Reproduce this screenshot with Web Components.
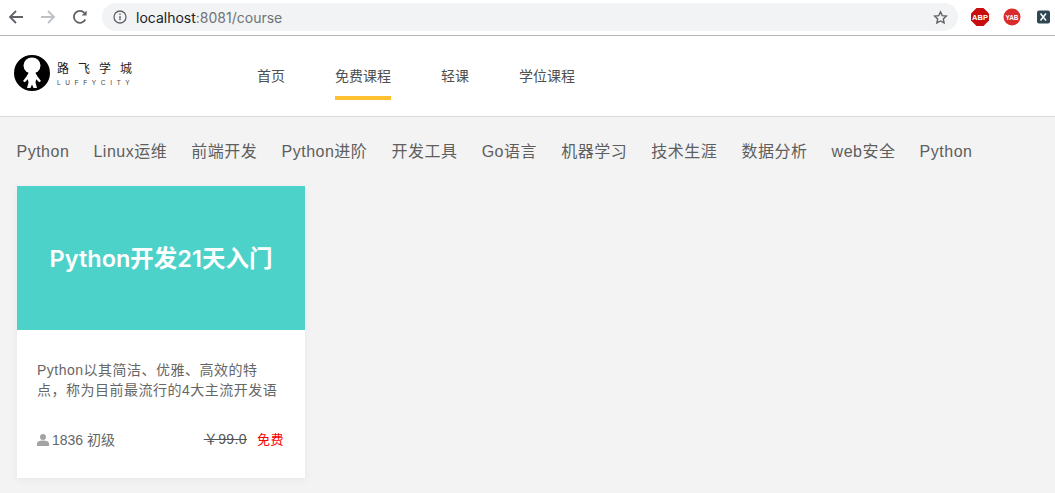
<!DOCTYPE html>
<html lang="zh">
<head>
<meta charset="utf-8">
<title>course</title>
<style>
  html, body { margin: 0; height: 100%; overflow: hidden; }
  body { font-family: "Liberation Sans", "Noto Sans CJK SC", sans-serif; background: #f3f3f3; }
  app-root { height: 493px; }
</style>
</head>
<body>
<app-root></app-root>

<template id="tpl-toolbar">
  <style>
    :host { display: flex; align-items: center; height: 35px; background: #fff; border-bottom: 1px solid #b5b5b5; }
    svg { display: block; flex: none; }
    .nav { display: flex; align-items: center; gap: 16px; padding-left: 8px; margin-bottom: 1px; }
    .omni { flex: 1; height: 28px; margin: 0 0 1px 14px; background: #f1f3f4; border-radius: 14px; display: flex; align-items: center; padding: 0 10px 0 11px; }
    .url { margin-left: 9px; font-family: Inter, sans-serif; font-size: 14px; color: #1f2124; flex: 1; }
    .url span { color: #6f7479; }
    .ext { display: flex; align-items: center; gap: 14px; padding: 0 5px 0 13px; margin-bottom: 1px; }
    .ext svg:last-child { margin-left: 2px; }
  </style>
  <div class="nav">
    <svg width="16" height="16" viewBox="0 0 16 16" fill="none" stroke="#5f6368" stroke-width="1.8"><path d="M15 8H2M8 2 2 8l6 6"/></svg>
    <svg width="16" height="16" viewBox="0 0 16 16" fill="none" stroke="#bdc1c6" stroke-width="1.8"><path d="M1 8h13M8 2l6 6-6 6"/></svg>
    <svg width="16" height="16" viewBox="0 0 16 16" fill="none" stroke="#5f6368" stroke-width="1.8"><path d="M13.300 10.500A6 6 0 1 1 12.400 3.800"/><path d="M14.600 1.500v5h-5" fill="#5f6368" stroke="none"/></svg>
  </div>
  <div class="omni">
    <svg width="14" height="14" viewBox="0 0 14 14" fill="none" stroke="#5f6368" stroke-width="1.300"><circle cx="7" cy="7" r="6"/><path d="M7 6v4.200M7 3.600v1.400"/></svg>
    <div class="url">localhost<span>:8081/course</span></div>
    <svg width="15" height="15" viewBox="0 0 24 24" fill="none" stroke="#5f6368" stroke-width="2.200"><path d="m12 3 2.800 6 6.500.8-4.800 4.400 1.300 6.500L12 17.500l-5.800 3.200 1.300-6.500L2.700 9.800 9.200 9z"/></svg>
  </div>
  <div class="ext">
    <svg width="18" height="18" viewBox="0 0 18 18"><path d="M5.500 0h7L18 5.500v7L12.500 18h-7L0 12.500v-7z" fill="#c70d0d"/><text x="9" y="12" text-anchor="middle" font-size="7.500" font-weight="700" fill="#fff" font-family="Liberation Sans">ABP</text></svg>
    <svg width="18" height="18" viewBox="0 0 18 18"><circle cx="9" cy="9" r="8.500" fill="#d92b2b"/><text x="9" y="11.500" text-anchor="middle" font-size="6.500" font-weight="700" fill="#fff" font-family="Liberation Sans">YAB</text></svg>
    <svg width="13" height="14" viewBox="0 0 13 14"><rect width="13" height="13" y=".5" rx="2" fill="#2e4753"/><path d="m3.500 3.500 5.500 7M9 3.500l-5.500 7" stroke="#fff" stroke-width="1.500"/></svg>
  </div>
</template>

<template id="tpl-logo">
  <style>
    :host { display: flex; align-items: center; gap: 7px; color: #222; }
    svg { display: block; flex: none; }
    .text { margin-top: 3px; }
    .cn { font-size: 12px; line-height: 14px; letter-spacing: 9px; white-space: nowrap; }
    .en { font-size: 6.500px; line-height: 9px; letter-spacing: 4.650px; color: #444; white-space: nowrap; margin-top: 2px; }
  </style>
  <svg width="36" height="36" viewBox="0 0 36 36">
    <circle cx="18" cy="18" r="18" fill="#000"/>
    <ellipse cx="18" cy="10.500" rx="8.500" ry="8" fill="#fff"/>
    <path d="M14.500 18h7l2 3.500 3.500 4.500-1.800 1.300-3-3-.7 3.200 1.500 5.500h-3.500L18 29.500 16.500 33H13l1.500-5.500-.7-3.200-3 3L9 26l3.500-4.500z" fill="#fff"/>
  </svg>
  <div class="text">
    <div class="cn">路飞学城</div>
    <div class="en">LUFFYCITY</div>
  </div>
</template>

<template id="tpl-header">
  <style>
    :host { display: flex; align-items: flex-start; height: 80px; background: #fff; border-bottom: 1px solid #d9d9d9; padding-left: 14px; }
    app-logo { height: 74px; width: 229px; flex: none; }
    nav { display: flex; align-items: flex-start; gap: 50px; padding-left: 14px; }
  </style>
  <app-logo></app-logo>
  <nav><slot></slot></nav>
</template>

<template id="tpl-nav-item">
  <style>
    :host { display: flex; align-items: center; height: 42px; padding-top: 18px; font-size: 14px; color: #505050; border-bottom: 4px solid transparent; white-space: nowrap; }
    :host([active]) { border-bottom-color: #ffc032; }
  </style>
  <slot></slot>
</template>

<template id="tpl-categories">
  <style>
    :host { display: flex; padding: 24px 0 0 16.500px; height: 21px; gap: 24.150px; }
  </style>
  <slot></slot>
</template>

<template id="tpl-category">
  <style>
    :host { display: block; font-size: 16px; line-height: 21px; letter-spacing: .5px; color: #5e5e5e; white-space: nowrap; }
  </style>
  <slot></slot>
</template>

<template id="tpl-card">
  <style>
    :host { display: block; width: 288px; height: 292px; background: #fff; box-shadow: 0 2px 8px rgba(0,0,0,.05); }
    .banner { height: 142px; padding-bottom: 2px; background: #4dd2ca; color: #fff; font-family: Inter, "Noto Sans CJK SC", sans-serif; font-size: 23.500px; font-weight: 600; display: flex; align-items: center; justify-content: center; }
    .body { padding: 30px 20px 0; }
    .desc { font-size: 14px; line-height: 20px; letter-spacing: .5px; color: #666; height: 40px; }
    .meta { display: flex; justify-content: space-between; align-items: center; margin-top: 29px; font-size: 14px; line-height: 20px; color: #666; }
    .left { display: flex; align-items: center; gap: 3px; }
    .right { padding-right: 1px; }
    svg { display: block; }
    del { color: #555; letter-spacing: .4px; }
    .free { color: #f00; margin-left: 10px; font-size: 13px; letter-spacing: .5px; }
  </style>
  <div class="banner"><slot name="title"></slot></div>
  <div class="body">
    <div class="desc"><slot name="desc"></slot></div>
    <div class="meta">
      <div class="left">
        <svg width="12" height="12" viewBox="0 0 12 12" fill="#a3a3a3"><circle cx="6" cy="3" r="3"/><path d="M0 12V9.500C0 7.800 2 6.500 6 6.500s6 1.300 6 3V12z"/></svg>
        <slot name="stats"></slot>
      </div>
      <div class="right"><del><slot name="price"></slot></del><span class="free"><slot name="free"></slot></span></div>
    </div>
  </div>
</template>

<template id="tpl-root">
  <style>
    :host { display: block; }
    main { padding: 24px 0 0 17px; }
  </style>
  <app-toolbar></app-toolbar>
  <app-header>
    <app-nav-item>首页</app-nav-item>
    <app-nav-item active>免费课程</app-nav-item>
    <app-nav-item>轻课</app-nav-item>
    <app-nav-item>学位课程</app-nav-item>
  </app-header>
  <app-categories>
    <app-category>Python</app-category>
    <app-category>Linux运维</app-category>
    <app-category>前端开发</app-category>
    <app-category>Python进阶</app-category>
    <app-category>开发工具</app-category>
    <app-category>Go语言</app-category>
    <app-category>机器学习</app-category>
    <app-category>技术生涯</app-category>
    <app-category>数据分析</app-category>
    <app-category>web安全</app-category>
    <app-category>Python</app-category>
  </app-categories>
  <main>
    <app-course-card>
      <span slot="title">Python开发21天入门</span>
      <span slot="desc">Python以其简洁、优雅、高效的特点，称为目前最流行的4大主流开发语</span>
      <span slot="stats">1836 初级</span>
      <span slot="price">￥99.0</span>
      <span slot="free">免费</span>
    </app-course-card>
  </main>
</template>

<script>
  function component(name, tplId) {
    customElements.define(name, class extends HTMLElement {
      constructor() {
        super();
        this.attachShadow({mode: 'open'});
        this.shadowRoot.appendChild(document.getElementById(tplId).content.cloneNode(true));
      }
    });
  }

  component('app-toolbar', 'tpl-toolbar');
  component('app-logo', 'tpl-logo');
  component('app-header', 'tpl-header');
  component('app-nav-item', 'tpl-nav-item');
  component('app-categories', 'tpl-categories');
  component('app-category', 'tpl-category');
  component('app-course-card', 'tpl-card');
  component('app-root', 'tpl-root');
</script>
</body>
</html>
